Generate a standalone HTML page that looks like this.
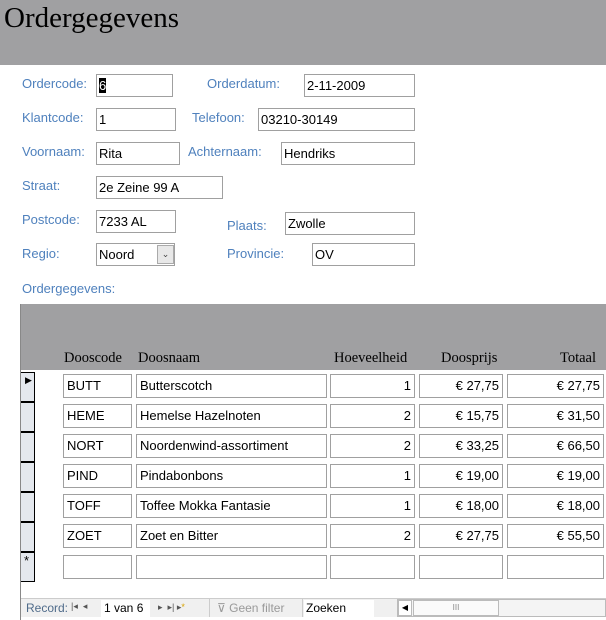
<!DOCTYPE html>
<html><head><style>
*{margin:0;padding:0;box-sizing:border-box}
body{width:606px;height:620px;background:#fff;position:relative;overflow:hidden;font-family:"Liberation Sans",sans-serif;font-size:13px}
.a{position:absolute}
.hdr{left:0;top:0;width:606px;height:65px;background:#a0a0a2}
.title{left:4px;top:2px;font-family:"Liberation Serif",serif;font-size:29px;color:#000}
.lbl{color:#4f81bd;font-size:13px}
.box{border:1px solid #a0a0a0;background:#fff;height:23px;padding:3px 2px;font-size:13px;color:#000;white-space:nowrap;overflow:hidden}
.sub{left:20px;top:304px;width:586px;height:316px;border-left:1px solid #888}
.sh{left:21px;top:304px;width:585px;height:66px;background:#a0a0a2}
.ch{font-family:"Liberation Serif",serif;font-size:14.5px;color:#000;top:350px}
.sel{left:21px;width:14px;height:30px;background:#e4e8ee;border:1px solid #000;border-left:none}
.c{border:1px solid #a0a0a0;height:24px;padding:3px 3px;font-size:13px;background:#fff}
.r{text-align:right}
.nav{left:21px;top:598px;width:585px;height:19px;background:#f0f0f0;border-top:1px solid #ccc;font-size:12px;color:#4f6b8a}
</style></head><body>
<div class="a hdr"></div>
<div class="a title">Ordergegevens</div>

<div class="a lbl" style="left:22px;top:76px">Ordercode:</div>
<div class="a box" style="left:96px;top:74px;width:77px"><span style="background:#000;color:#fff">6</span></div>
<div class="a lbl" style="left:207px;top:76px">Orderdatum:</div>
<div class="a box" style="left:304px;top:74px;width:111px">2-11-2009</div>

<div class="a lbl" style="left:22px;top:110px">Klantcode:</div>
<div class="a box" style="left:96px;top:108px;width:80px">1</div>
<div class="a lbl" style="left:192px;top:110px">Telefoon:</div>
<div class="a box" style="left:258px;top:108px;width:157px">03210-30149</div>

<div class="a lbl" style="left:22px;top:144px">Voornaam:</div>
<div class="a box" style="left:96px;top:142px;width:84px">Rita</div>
<div class="a lbl" style="left:188px;top:144px">Achternaam:</div>
<div class="a box" style="left:281px;top:142px;width:134px">Hendriks</div>

<div class="a lbl" style="left:22px;top:178px">Straat:</div>
<div class="a box" style="left:96px;top:176px;width:127px">2e Zeine 99 A</div>

<div class="a lbl" style="left:22px;top:212px">Postcode:</div>
<div class="a box" style="left:96px;top:210px;width:80px">7233 AL</div>
<div class="a lbl" style="left:227px;top:218px">Plaats:</div>
<div class="a box" style="left:285px;top:212px;width:130px">Zwolle</div>

<div class="a lbl" style="left:22px;top:246px">Regio:</div>
<div class="a box" style="left:96px;top:243px;width:79px">Noord</div>
<div class="a" style="left:157px;top:245px;width:17px;height:19px;border:1px solid #aaa;background:#e8e8e8;font-size:9px;text-align:center;line-height:17px;color:#444">&#8964;</div>
<div class="a lbl" style="left:227px;top:246px">Provincie:</div>
<div class="a box" style="left:312px;top:243px;width:103px">OV</div>

<div class="a lbl" style="left:22px;top:281px">Ordergegevens:</div>

<div class="a sub"></div>
<div class="a sh"></div>
<div class="a ch" style="left:64px">Dooscode</div>
<div class="a ch" style="left:138px">Doosnaam</div>
<div class="a ch" style="left:334px">Hoeveelheid</div>
<div class="a ch" style="left:441px">Doosprijs</div>
<div class="a ch" style="left:560px">Totaal</div>

<div class="a sel" style="top:372px"><span style="position:absolute;left:4px;top:2px;font-size:9px">&#9654;</span></div>
<div class="a sel" style="top:402px"></div>
<div class="a sel" style="top:432px"></div>
<div class="a sel" style="top:462px"></div>
<div class="a sel" style="top:492px"></div>
<div class="a sel" style="top:522px"></div>
<div class="a sel" style="top:552px;height:30px"><span style="position:absolute;left:3px;top:0px;font-size:13px">*</span></div>

<div class="a c" style="left:63px;top:374px;width:69px">BUTT</div><div class="a c" style="left:136px;top:374px;width:191px">Butterscotch</div><div class="a c r" style="left:330px;top:374px;width:85px">1</div><div class="a c r" style="left:419px;top:374px;width:84px">€ 27,75</div><div class="a c r" style="left:507px;top:374px;width:97px">€ 27,75</div>
<div class="a c" style="left:63px;top:404px;width:69px">HEME</div><div class="a c" style="left:136px;top:404px;width:191px">Hemelse Hazelnoten</div><div class="a c r" style="left:330px;top:404px;width:85px">2</div><div class="a c r" style="left:419px;top:404px;width:84px">€ 15,75</div><div class="a c r" style="left:507px;top:404px;width:97px">€ 31,50</div>
<div class="a c" style="left:63px;top:434px;width:69px">NORT</div><div class="a c" style="left:136px;top:434px;width:191px">Noordenwind-assortiment</div><div class="a c r" style="left:330px;top:434px;width:85px">2</div><div class="a c r" style="left:419px;top:434px;width:84px">€ 33,25</div><div class="a c r" style="left:507px;top:434px;width:97px">€ 66,50</div>
<div class="a c" style="left:63px;top:464px;width:69px">PIND</div><div class="a c" style="left:136px;top:464px;width:191px">Pindabonbons</div><div class="a c r" style="left:330px;top:464px;width:85px">1</div><div class="a c r" style="left:419px;top:464px;width:84px">€ 19,00</div><div class="a c r" style="left:507px;top:464px;width:97px">€ 19,00</div>
<div class="a c" style="left:63px;top:494px;width:69px">TOFF</div><div class="a c" style="left:136px;top:494px;width:191px">Toffee Mokka Fantasie</div><div class="a c r" style="left:330px;top:494px;width:85px">1</div><div class="a c r" style="left:419px;top:494px;width:84px">€ 18,00</div><div class="a c r" style="left:507px;top:494px;width:97px">€ 18,00</div>
<div class="a c" style="left:63px;top:524px;width:69px">ZOET</div><div class="a c" style="left:136px;top:524px;width:191px">Zoet en Bitter</div><div class="a c r" style="left:330px;top:524px;width:85px">2</div><div class="a c r" style="left:419px;top:524px;width:84px">€ 27,75</div><div class="a c r" style="left:507px;top:524px;width:97px">€ 55,50</div>
<div class="a c" style="left:63px;top:555px;width:69px"></div><div class="a c" style="left:136px;top:555px;width:191px"></div><div class="a c" style="left:330px;top:555px;width:85px"></div><div class="a c" style="left:419px;top:555px;width:84px"></div><div class="a c" style="left:507px;top:555px;width:97px"></div>

<div class="a nav">
 <span class="a" style="left:5px;top:2px">Record:</span>
 <span class="a" style="left:50px;top:2px;font-size:9px;color:#555">|◂ &nbsp;◂</span>
 <div class="a" style="left:80px;top:1px;width:49px;height:17px;background:#fff;color:#000;padding:1px 3px">1 van 6</div>
 <span class="a" style="left:137px;top:3px;font-size:9px;color:#555">▸ &nbsp;▸| ▸<span style="color:#d9a300">*</span></span>
 <div class="a" style="left:188px;top:0;width:1px;height:18px;background:#ccc"></div>
 <span class="a" style="left:196px;top:2px;color:#999">⊽ Geen filter</span>
 <div class="a" style="left:281px;top:0;width:1px;height:18px;background:#ccc"></div>
 <div class="a" style="left:283px;top:1px;width:70px;height:17px;background:#fff;color:#000;padding:1px 2px">Zoeken</div>
 <div class="a" style="left:376px;top:0;width:209px;height:18px;border:1px solid #bbb;background:#f4f4f4"></div>
 <div class="a" style="left:377px;top:1px;width:14px;height:16px;border:1px solid #bbb;background:#fff;font-size:8px;color:#000;text-align:center;line-height:14px">◀</div>
 <div class="a" style="left:392px;top:1px;width:86px;height:16px;border:1px solid #bbb;background:#fafafa;font-size:8px;color:#888;text-align:center;line-height:14px">III</div>
</div>
</body></html>
